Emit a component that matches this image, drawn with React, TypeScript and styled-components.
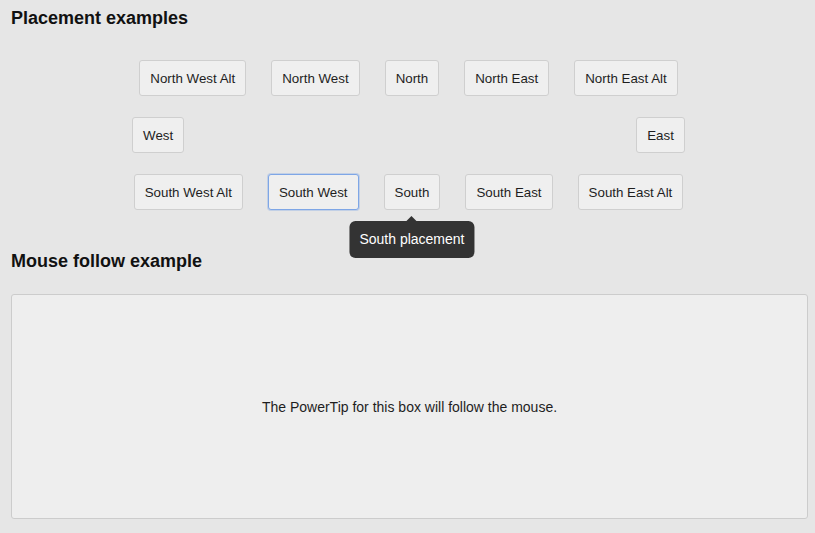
import React from 'react'
import styled, { createGlobalStyle } from 'styled-components'

const GlobalStyle = createGlobalStyle`
  html, body {
    margin: 0;
    padding: 0;
    background: #e6e6e6;
    font-family: "Liberation Sans", Arial, sans-serif;
    color: #222;
  }
`

const Page = styled.div`
  padding: 0 7px 0 11px;
`

const Heading = styled.h2`
  margin: 0;
  font-size: 18px;
  font-weight: bold;
  color: #111;
  line-height: 20px;
`

const PlacementHeading = styled(Heading)`
  padding-top: 8px;
`

const Grid = styled.div`
  display: flex;
  flex-direction: column;
  gap: 21px;
  margin-top: 32px;
`

const Row = styled.div<{ gap: number }>`
  display: flex;
  justify-content: center;
  gap: ${p => p.gap}px;
  padding-right: 2px;
`

const TipButton = styled.button<{ focused?: boolean }>`
  position: relative;
  height: 36px;
  padding: 0 10px;
  background: #efefef;
  border: 1px solid ${p => (p.focused ? '#7ea6e6' : '#cfcfcf')};
  box-shadow: ${p => (p.focused ? '0 0 0 1px rgba(126,166,230,0.35)' : 'none')};
  border-radius: 3px;
  font-family: "Liberation Sans", Arial, sans-serif;
  font-size: 13.333px;
  color: #1e1e1e;
  cursor: pointer;
`

const Tooltip = styled.div`
  position: absolute;
  top: 46px;
  left: 50%;
  transform: translateX(-50%);
  white-space: nowrap;
  background: #333;
  color: #fff;
  font-size: 14px;
  padding: 10px 10px;
  line-height: 17px;
  border-radius: 6px;
  z-index: 2;

  &::before {
    content: '';
    position: absolute;
    top: -10px;
    left: 50%;
    margin-left: -5px;
    border: 5px solid transparent;
    border-bottom-color: #333;
  }
`

const MouseHeading = styled(Heading)`
  margin-top: 41px;
`

const FollowBox = styled.div`
  margin-top: 23px;
  height: 223px;
  background: #eeeeee;
  border: 1px solid #cccccc;
  border-radius: 3px;
  display: flex;
  align-items: center;
  justify-content: center;
  font-size: 14px;
  color: #1e1e1e;
`

export default function App() {
  return (
    <>
      <GlobalStyle />
      <Page>
        <PlacementHeading>Placement examples</PlacementHeading>
        <Grid>
          <Row gap={25}>
            <TipButton>North West Alt</TipButton>
            <TipButton>North West</TipButton>
            <TipButton>North</TipButton>
            <TipButton>North East</TipButton>
            <TipButton>North East Alt</TipButton>
          </Row>
          <Row gap={452}>
            <TipButton>West</TipButton>
            <TipButton>East</TipButton>
          </Row>
          <Row gap={25}>
            <TipButton>South West Alt</TipButton>
            <TipButton focused>South West</TipButton>
            <TipButton>
              South
              <Tooltip>South placement</Tooltip>
            </TipButton>
            <TipButton>South East</TipButton>
            <TipButton>South East Alt</TipButton>
          </Row>
        </Grid>
        <MouseHeading>Mouse follow example</MouseHeading>
        <FollowBox>The PowerTip for this box will follow the mouse.</FollowBox>
      </Page>
    </>
  )
}
